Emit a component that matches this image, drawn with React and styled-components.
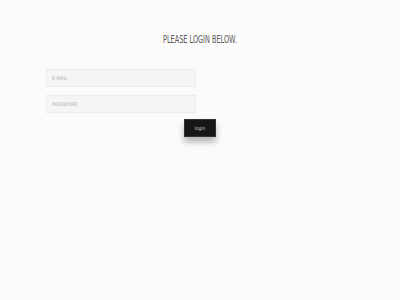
import React from 'react'
import styled, { createGlobalStyle } from 'styled-components'

const Global = createGlobalStyle`
  html, body {
    margin: 0;
    padding: 0;
    background: #fbfbfb;
  }
  body {
    font-family: "Liberation Sans Narrow", "DejaVu Sans Condensed", sans-serif;
  }
`;

const Page = styled.div`
  width: 400px;
  height: 300px;
  display: flex;
  flex-direction: column;
  align-items: center;
  background: #fbfbfb;
`;

const Title = styled.h1`
  margin: 34px 0 0;
  font-size: 11px;
  line-height: 12px;
  font-weight: 400;
  color: #5a5a5a;
  transform: scaleX(0.66);
`;

const Form = styled.form`
  width: 400px;
  margin-top: 23px;
  display: flex;
  flex-direction: column;
  gap: 8px;
  padding-left: 46px;
  box-sizing: border-box;
`;

const Field = styled.input`
  width: 150px;
  height: 18px;
  box-sizing: border-box;
  border: 1px solid #ececec;
  background: #f5f5f5;
  padding: 0 5px;
  font-family: inherit;
  font-size: 5px;
  color: #999;
  outline: none;
  &::placeholder {
    color: #b0b0b0;
    text-transform: uppercase;
  }
`;

const Actions = styled.div`
  width: 400px;
  display: flex;
  justify-content: center;
  margin-top: 6px;
`;

const Button = styled.button`
  width: 32px;
  height: 18px;
  border: 1px solid #333;
  background: #161616;
  color: #ccc;
  font-family: inherit;
  font-size: 5px;
  padding: 0;
  cursor: pointer;
  box-shadow: 0 5px 6px rgba(0, 0, 0, 0.28);
`;

export default function App() {
  return (
    <Page>
      <Global />
      <Title>PLEASE LOGIN BELOW.</Title>
      <Form onSubmit={e => e.preventDefault()}>
        <Field type="email" placeholder="E-MAIL" />
        <Field type="password" placeholder="PASSWORD" />
      </Form>
      <Actions>
        <Button type="submit">login</Button>
      </Actions>
    </Page>
  )
}
